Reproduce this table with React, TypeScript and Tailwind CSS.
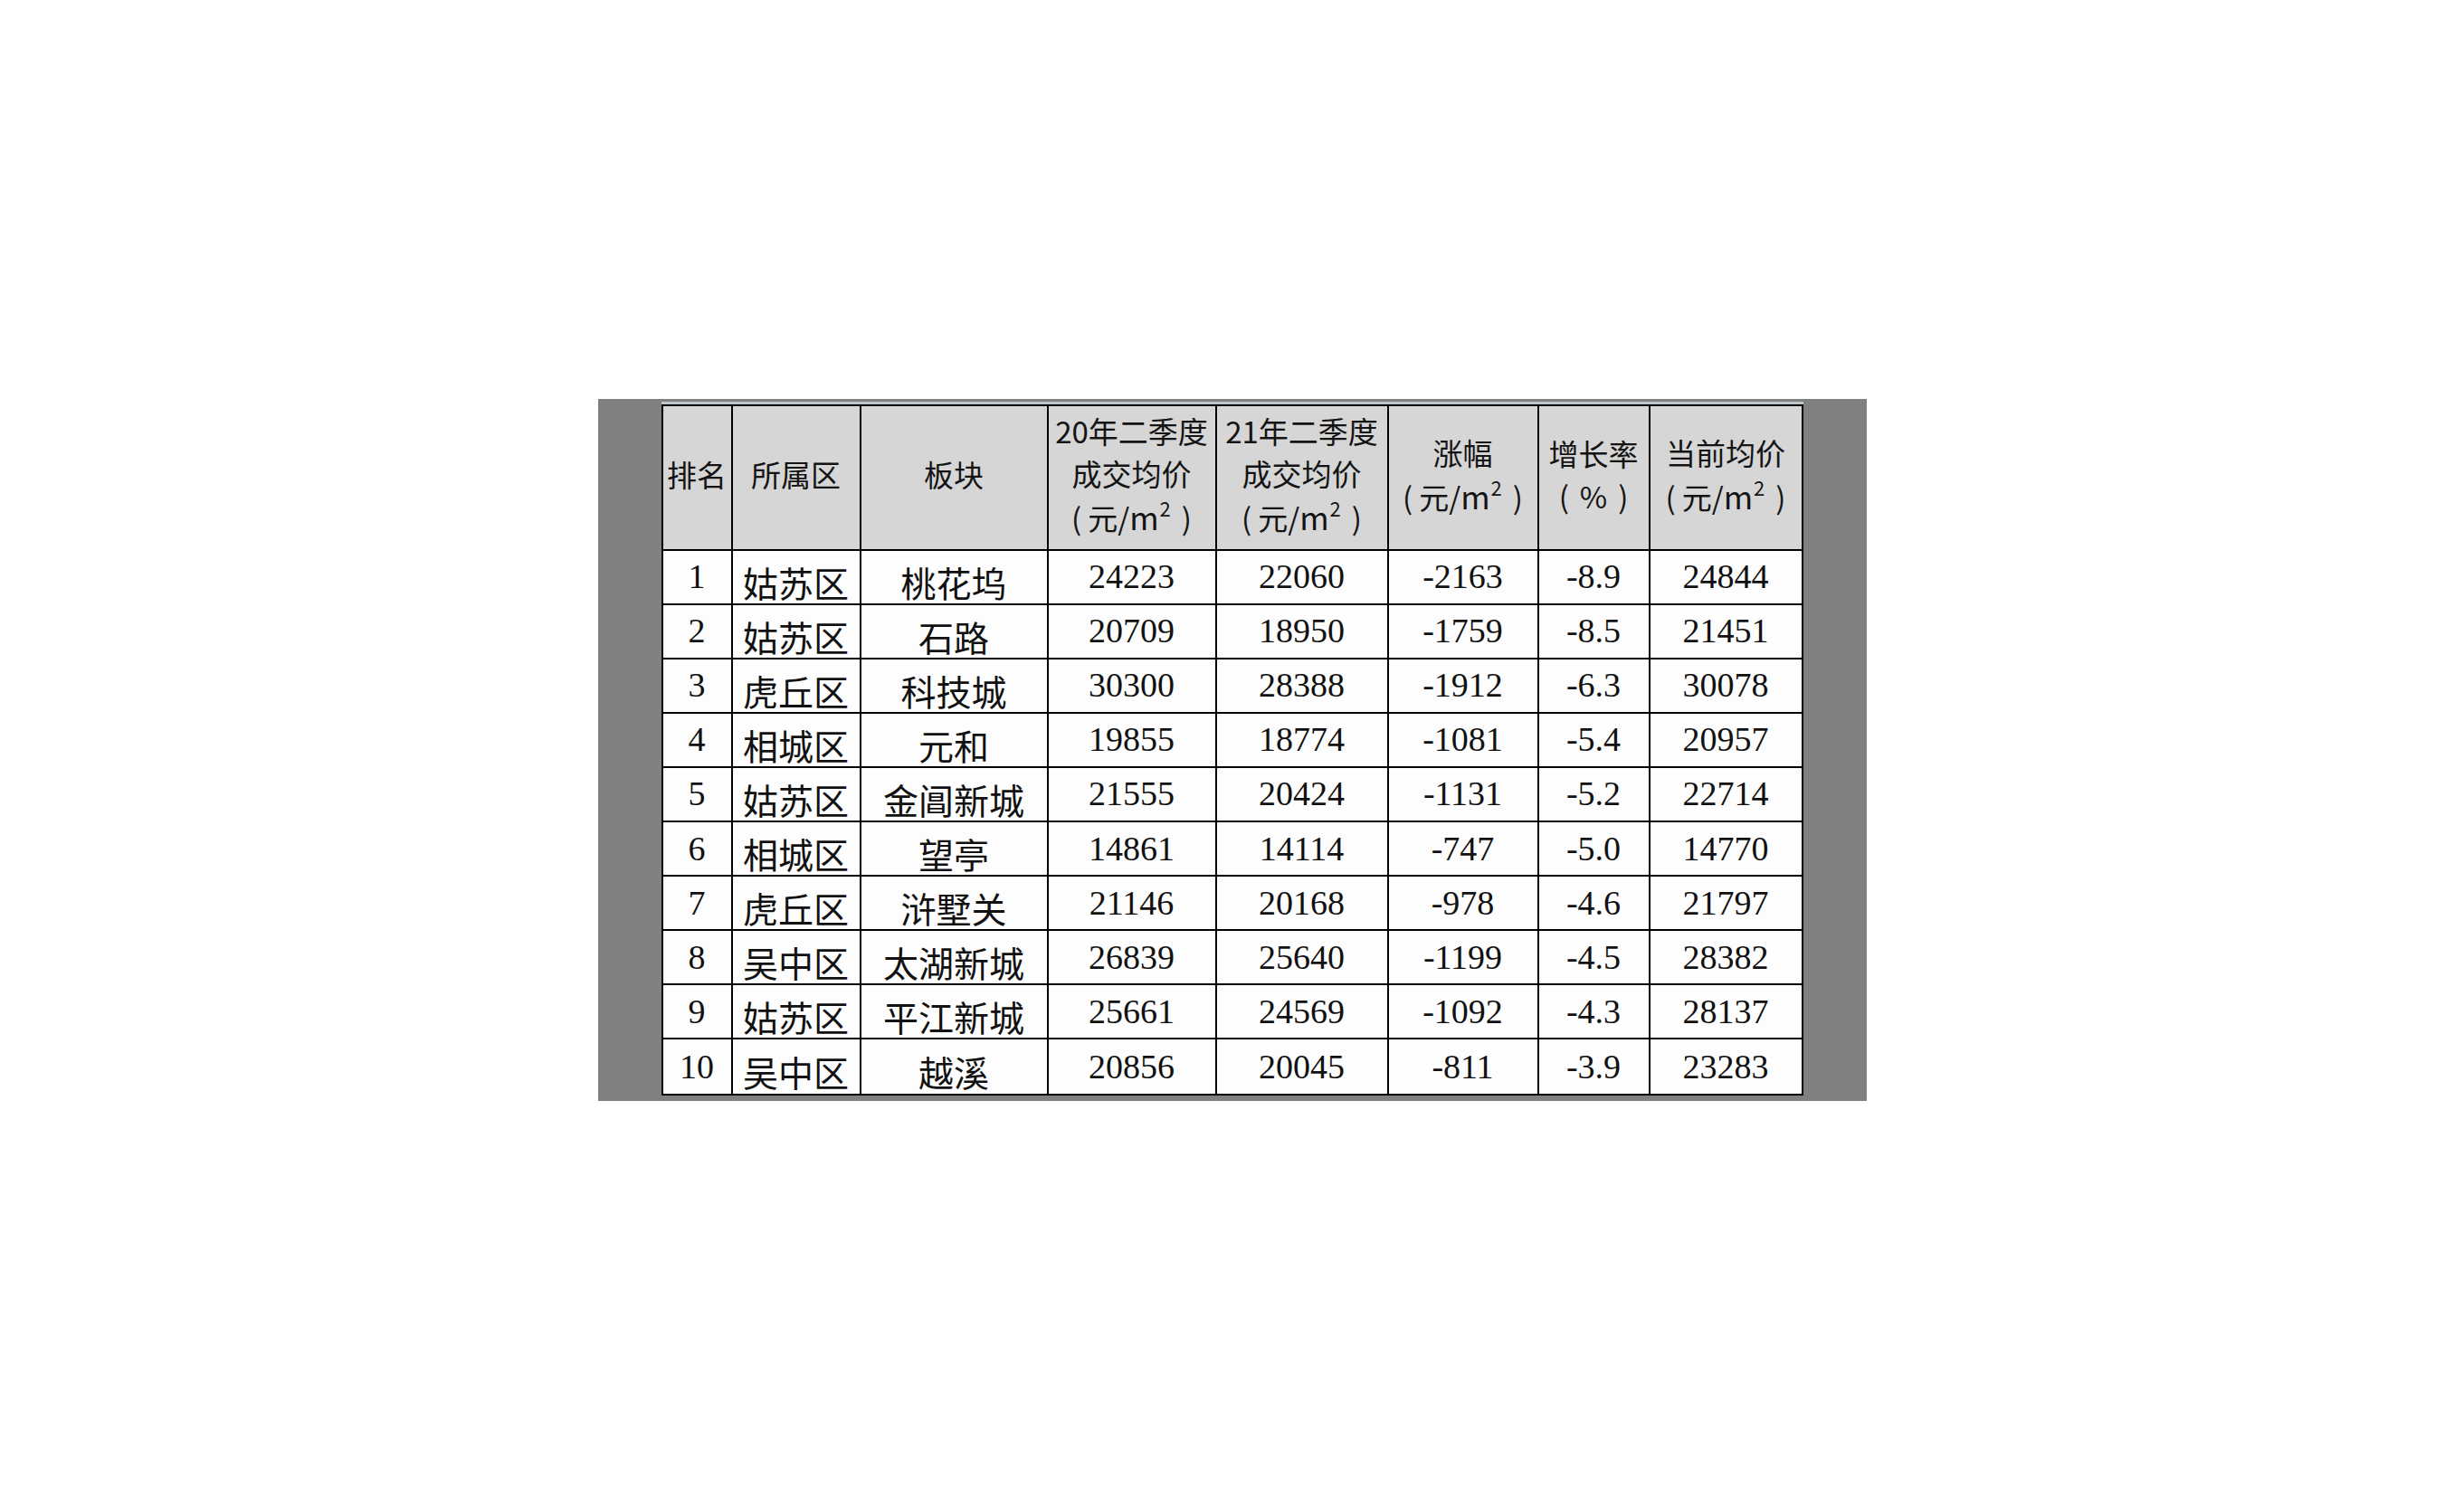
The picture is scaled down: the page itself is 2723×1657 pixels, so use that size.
import React from 'react';

type Row = [string, string, string, string, string, string, string, string];

const rows: Row[] = [
  ['1', '姑苏区', '桃花坞', '24223', '22060', '-2163', '-8.9', '24844'],
  ['2', '姑苏区', '石路', '20709', '18950', '-1759', '-8.5', '21451'],
  ['3', '虎丘区', '科技城', '30300', '28388', '-1912', '-6.3', '30078'],
  ['4', '相城区', '元和', '19855', '18774', '-1081', '-5.4', '20957'],
  ['5', '姑苏区', '金阊新城', '21555', '20424', '-1131', '-5.2', '22714'],
  ['6', '相城区', '望亭', '14861', '14114', '-747', '-5.0', '14770'],
  ['7', '虎丘区', '浒墅关', '21146', '20168', '-978', '-4.6', '21797'],
  ['8', '吴中区', '太湖新城', '26839', '25640', '-1199', '-4.5', '28382'],
  ['9', '姑苏区', '平江新城', '25661', '24569', '-1092', '-4.3', '28137'],
  ['10', '吴中区', '越溪', '20856', '20045', '-811', '-3.9', '23283'],
];

const Unit = () => (
  <span>
    <span className="mr-[7px]">(</span>元/<span className="text-[35px]">m</span>
    <sup className="text-[22px] -top-[15px] ml-[1px]">2</sup>
    <span className="ml-[12px]">)</span>
  </span>
);

const Pct = () => (
  <span>
    <span className="mr-[12px]">(</span>%<span className="ml-[12px]">)</span>
  </span>
);

const headers: React.ReactNode[][] = [
  ['排名'],
  ['所属区'],
  ['板块'],
  ['20年二季度', '成交均价', <Unit key="u" />],
  ['21年二季度', '成交均价', <Unit key="u" />],
  ['涨幅', <Unit key="u" />],
  ['增长率', <Pct key="p" />],
  ['当前均价', <Unit key="u" />],
];

export default function App() {
  return (
    <div className="w-[2723px] h-[1657px] bg-white flex items-center justify-center">
      {/* grey frame around the sheet */}
      <div className="w-[1402px] h-[776px] bg-[#808080] flex flex-col items-center pt-[3px]">
        <div className="w-[1262px] h-[3px] bg-[#bcc6cd]" />
        <div className="w-[1262px] border-2 border-black grid grid-cols-[77px_142px_207px_186px_190px_166px_123px_167px]">
          {headers.map((lines, i) => (
            <div
              key={i}
              className={`h-[160px] bg-[#d6d6d6] border-b-2 border-black flex flex-col items-center justify-center pb-[6px] whitespace-nowrap font-['Noto_Sans_CJK_SC',sans-serif] text-[33px] leading-[47px] text-[#141414] ${
                i < 7 ? 'border-r-2' : ''
              }`}
            >
              {lines.map((l, j) => (
                <div key={j}>{l}</div>
              ))}
            </div>
          ))}
          {rows.map((r, ri) =>
            r.map((v, ci) => {
              const cjk = ci === 1 || ci === 2;
              return (
                <div
                  key={`${ri}-${ci}`}
                  className={`h-[60.1px] bg-[#fdfdfd] border-black flex items-center justify-center whitespace-nowrap text-[#111] ${
                    ci < 7 ? 'border-r-2' : ''
                  } ${ri < 9 ? 'border-b-2' : ''} ${
                    cjk
                      ? "pt-[11px] font-['Noto_Sans_CJK_SC',sans-serif] text-[39px] leading-none"
                      : "font-['Liberation_Serif',serif] text-[38px]"
                  }`}
                >
                  {v}
                </div>
              );
            })
          )}
        </div>
      </div>
    </div>
  );
}
